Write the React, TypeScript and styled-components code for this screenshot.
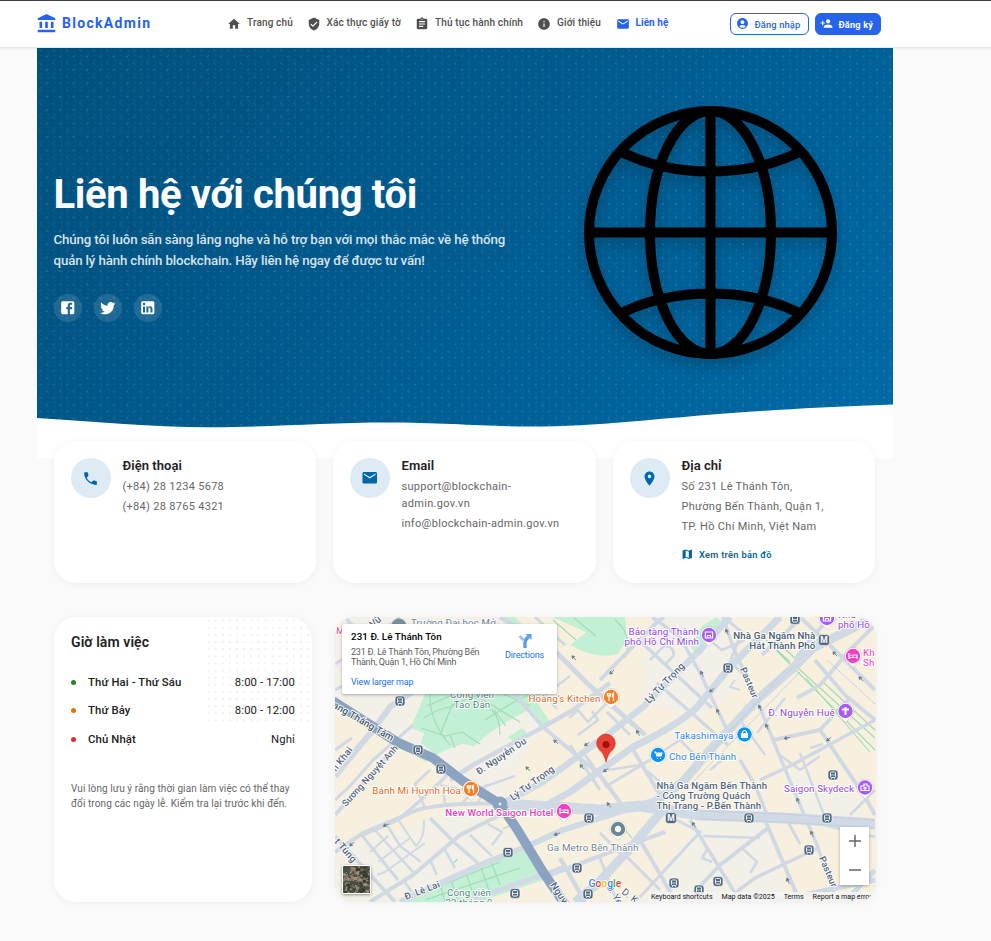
import React from "react";
import styled, { createGlobalStyle } from "styled-components";
import {
  MdAccountBalance, MdHome, MdVerifiedUser, MdAssignment, MdInfo, MdEmail,
  MdAccountCircle, MdPersonAdd, MdPhone, MdLocationOn, MdMap,
} from "react-icons/md";

const Global = createGlobalStyle`
  * { box-sizing: border-box; }
  body { margin: 0; background: #fafafa; font-family: Roboto, sans-serif; color: #212121; overflow: hidden; }
  svg { display: block; flex: none; }
  h1, h2, h3, p { margin: 0; }
`;

const Page = styled.div`width: 991px; height: 941px; overflow: hidden; background: #fafafa;`;

const Header = styled.header`
  position: relative; z-index: 2; height: 47px; padding: 0 110px 0 36px;
  display: flex; align-items: center; background: #fff;
  border-top: 1px solid #3c4245; box-shadow: 0 1px 3px rgba(0,0,0,.12);
`;
const Brand = styled.div`
  display: flex; align-items: center; gap: 5px; width: 191px; color: #2563eb;
  font-size: 14px; line-height: 18px; font-weight: 700; letter-spacing: 1.3px; white-space: nowrap;
  svg { margin-top: -2px; }
  span { margin-top: -2px; }
`;
const Nav = styled.nav`display: flex; align-items: center; flex: 1;`;
const NavItem = styled.a<{ $active?: boolean; $width: number }>`
  display: flex; align-items: center; gap: 6px; width: ${p => p.$width}px; white-space: nowrap;
  font-size: 10px; font-weight: ${p => (p.$active ? 700 : 500)}; letter-spacing: ${p => (p.$active ? .05 : .15)}px;
  color: ${p => (p.$active ? "#2563eb" : "#4f4f4f")};
  svg { margin-top: 0; }
  span { margin-top: -4px; }
`;
const Actions = styled.div`display: flex; gap: 6px;`;
const Button = styled.button<{ $solid?: boolean }>`
  height: 22px; width: ${p => (p.$solid ? 66 : 79)}px; padding: 0 0 0 ${p => (p.$solid ? 4 : 5)}px; display: flex; align-items: center; gap: 5.5px;
  border: 1px solid #2563eb; border-radius: 6px; font: ${p => (p.$solid ? 700 : 500)} 9.3px Roboto, sans-serif;
  letter-spacing: .14px; white-space: nowrap;
  background: ${p => (p.$solid ? "#2563eb" : "#fff")}; color: ${p => (p.$solid ? "#fff" : "#2563eb")};
  svg { margin-top: -1px; }
`;

const Main = styled.main`width: 856px; margin-left: 37px; padding-top: 1px;`;
const Hero = styled.section`
  position: relative; height: 410px; padding: 0 56px 0 17px; overflow: hidden;
  display: flex; justify-content: space-between; align-items: flex-start;
  background:
    radial-gradient(circle, rgba(255,255,255,.10) .9px, transparent 1.2px) 3px 2px / 13.4px 13.4px,
    radial-gradient(circle, rgba(255,255,255,.08) .8px, transparent 1.1px) 9.7px 8.7px / 13.4px 13.4px,
    radial-gradient(circle, rgba(255,255,255,.10) .6px, transparent 1px) 1px 1px / 6.7px 4.5px,
    linear-gradient(135deg, #01507c 0%, #005a8e 45%, #006aa7 100%);
`;
const HeroText = styled.div`padding-top: 123px; color: #fff;`;
const HeroTitle = styled.h1`font-size: 40px; line-height: 48px; font-weight: 700; letter-spacing: -.36px; white-space: nowrap; margin-left: -.5px;`;
const HeroLead = styled.p`
  margin-top: 10px; font-size: 13.3px; line-height: 21.3px; font-weight: 500; letter-spacing: -.14px;
  color: rgba(255,255,255,.85); white-space: nowrap; margin-left: -.5px;
`;
const Socials = styled.div`display: flex; gap: 12px; margin-top: 22.5px; margin-left: -.5px;`;
const Social = styled.a`
  width: 28px; height: 28px; border-radius: 50%; background: rgba(255,255,255,.12);
  display: grid; place-items: center; color: #fff;
`;
const Globe = styled.svg`margin-top: 57.5px; overflow: visible; filter: drop-shadow(0 7px 7px rgba(0,0,0,.2));`;
const Wave = styled.svg`position: absolute; left: 0; bottom: 0;`;

const Contacts = styled.section`
  position: relative; display: grid; grid-template-columns: 262px 263px 262px; gap: 17px;
  margin: -17px 17px 0; height: 142px;
`;
const Card = styled.article`
  background: #fff; border-radius: 22px; box-shadow: 0 1px 8px rgba(0,0,0,.05);
  padding: 17px; display: flex; gap: 11.5px;
`;
const Bubble = styled.div`
  width: 40px; height: 40px; flex: none; border-radius: 50%; background: #deebf4; color: #0067a5;
  display: grid; place-items: center;
  svg { margin-left: -1px; }
`;
const CardTitle = styled.h3`font-size: 13px; line-height: 16px; font-weight: 600; letter-spacing: .05px; margin-bottom: 4px;`;
const Line = styled.p`
  font-size: 11px; line-height: 17px; margin-bottom: 3px; color: #666; letter-spacing: .3px; white-space: nowrap;
`;
const MapLink = styled.a`
  display: flex; align-items: center; gap: 6px; margin-top: 12.500px; line-height: 14px; margin-left: -1px;
  font-size: 9.3px; font-weight: 600; letter-spacing: .26px; color: #0067a5; white-space: nowrap;
`;

const Lower = styled.section`display: flex; gap: 23px; margin: 34px 17px 0;`;
const Hours = styled.article`
  width: 258px; height: 285px; border-radius: 22px; padding: 17px;
  box-shadow: 0 1px 8px rgba(0,0,0,.05);
  background: linear-gradient(#fff,#fff) 0 0 / 152px 100% no-repeat, linear-gradient(#fff,#fff) 0 106px / 100% 200px no-repeat,
    radial-gradient(circle, #eee 1px, transparent 1.3px) 151px 0 / 7.13px 7.13px, #fff;
`;
const HoursTitle = styled.h2`font-size: 14px; line-height: 17px; font-weight: 600; margin-bottom: 17px; letter-spacing: .09px;`;
const Day = styled.div`
  display: flex; align-items: center; height: 28.5px; font-size: 11.3px; letter-spacing: .13px;
`;
const Dot = styled.i<{ $color: string }>`width: 5px; height: 5px; border-radius: 50%; margin-right: 12px; background: ${p => p.$color};`;
const DayName = styled.span`font-weight: 500; flex: 1;`;
const Note = styled.p`margin-top: 28.5px; font-size: 10px; line-height: 14.7px; color: #666; letter-spacing: .1px; white-space: nowrap;`;

const MapFrame = styled.div`
  position: relative; width: 541px; height: 285px; border-radius: 20px; overflow: hidden; background: #f5efe2;
  box-shadow: 0 1px 8px rgba(0,0,0,.05);
`;
const Place = styled.div`
  position: absolute; left: 7px; top: 7px; width: 215px; height: 70px; padding: 7px 13px 0 9px; background: #fff;
  border-radius: 2px; box-shadow: 0 1px 3px rgba(0,0,0,.3); display: flex; justify-content: space-between;
`;
const PlaceName = styled.div`font-size: 9.8px; line-height: 12px; font-weight: 500; color: #000; white-space: nowrap; letter-spacing: .08px;`;
const PlaceAddr = styled.div`font-size: 9px; line-height: 10px; margin-top: 4px; color: #5b5b5b; white-space: nowrap; letter-spacing: -.2px;`;
const Blue = styled.a`display: block; font-size: 9px; line-height: 11px; color: #1a73e8; letter-spacing: -.15px;`;
const Larger = styled(Blue)`margin-top: 10px;`;
const Directions = styled.div`display: flex; flex-direction: column; align-items: center; padding-top: 2px; gap: 2px;`;
const Thumb = styled.div`position: absolute; left: 7px; top: 248px; width: 29px; height: 29px; border: 1px solid #fff; border-radius: 2px; overflow: hidden; box-shadow: 0 1px 3px rgba(0,0,0,.4);`;
const ZoomBox = styled.div`
  position: absolute; left: 505px; top: 210px; width: 29px; height: 58px; background: #fff; box-shadow: 0 1px 3px rgba(0,0,0,.3);
  display: grid; grid-template-rows: 28px 30px; place-items: center;
`;
const Legal = styled.div`
  position: absolute; left: 313px; bottom: 0; height: 10px; padding-left: 3px; width: 228px; display: flex; align-items: center; gap: 9px;
  background: rgba(245,245,245,.8); font-size: 7.1px; line-height: 10px; color: #111; white-space: nowrap;
`;

const paths = {
  facebook: "M5 3h14a2 2 0 0 1 2 2v14a2 2 0 0 1-2 2H5a2 2 0 0 1-2-2V5a2 2 0 0 1 2-2m13 2h-2.5A3.5 3.5 0 0 0 12 8.5V11h-2v3h2v7h3v-7h3v-3h-3V9a1 1 0 0 1 1-1h2V5z",
  twitter: "M22.46 6c-.77.35-1.6.58-2.46.69.88-.53 1.56-1.37 1.88-2.38-.83.5-1.75.85-2.72 1.05C18.37 4.5 17.26 4 16 4c-2.35 0-4.27 1.92-4.27 4.29 0 .34.04.67.11.98C8.28 9.09 5.11 7.38 3 4.79c-.37.63-.58 1.37-.58 2.15 0 1.49.75 2.81 1.91 3.56-.71 0-1.37-.2-1.95-.5v.03c0 2.08 1.48 3.82 3.44 4.21a4.22 4.22 0 0 1-1.93.07 4.28 4.28 0 0 0 4 2.98 8.521 8.521 0 0 1-5.33 1.84c-.34 0-.68-.02-1.02-.06C3.44 20.29 5.7 21 8.12 21 16 21 20.33 14.46 20.33 8.79c0-.19 0-.37-.01-.56.84-.6 1.56-1.36 2.14-2.23z",
  linkedin: "M19 3a2 2 0 0 1 2 2v14a2 2 0 0 1-2 2H5a2 2 0 0 1-2-2V5a2 2 0 0 1 2-2h14m-.5 15.5v-5.3a3.26 3.26 0 0 0-3.26-3.26c-.85 0-1.84.52-2.32 1.3v-1.11h-2.79v8.37h2.79v-4.93c0-.77.62-1.4 1.39-1.4a1.4 1.4 0 0 1 1.4 1.4v4.93h2.79M6.88 8.56a1.68 1.68 0 0 0 1.68-1.68c0-.93-.75-1.69-1.68-1.69a1.69 1.69 0 0 0-1.69 1.69c0 .93.76 1.68 1.69 1.68m1.39 9.94v-8.37H5.5v8.37h2.77z",
};

const nav = [
  { label: "Trang chủ", Icon: MdHome, w: 79.5 },
  { label: "Xác thực giấy tờ", Icon: MdVerifiedUser, w: 108.5 },
  { label: "Thủ tục hành chính", Icon: MdAssignment, w: 122 },
  { label: "Giới thiệu", Icon: MdInfo, w: 78.5 },
  { label: "Liên hệ", Icon: MdEmail, w: 60, active: true },
];

/* Street network: [path, width] */
const minor: [string, number][] = [
  ["M335 664L372 640L400 617", 3], ["M335 690L366 673L400 648", 3], ["M427 682L390 707L373 730L335 776", 6],
  ["M413 725L373 760L350 786L335 800", 3], ["M395 747L335 815", 4], ["M335 750L352 738", 3],
  ["M452 770L430 792L398 820L363 835", 3.5], ["M335 852L363 833L417 810Q450 802 503 804", 4],
  ["M335 836L395 902", 4], ["M360 833L398 880", 3], ["M373 828L413 872", 2.5], ["M386 823L400 846L421 862", 2.5],
  ["M397 818L416 846Q425 838 424 820", 2], ["M370 852L388 836M378 862L410 838M377 875L385 872L425 843", 2],
  ["M370 902L413 875L460 835L498 816L507 806", 4], ["M430 818L455 843L480 865", 3.5], ["M403 880L412 892M430 860L437 875M445 850L455 868", 2.5],
  ["M425 808L415 784L430 770", 2.5], ["M445 803L443 790M462 803L475 790L515 776", 2.5], ["M478 803L487 784", 2],
  ["M488 824L502 832L492 845M470 835L492 856", 2.5], ["M465 790L440 785", 2],
  ["M490 666L543 727L600 775L627 812", 4], ["M500 617L557 653L587 683L645 735", 5], ["M535 617L565 645", 3],
  ["M610 683L573 710L543 727L473 765L450 780", 4.5], ["M600 680L657 622L664 617", 4], ["M640 641L712 708", 3.5],
  ["M557 709L545 695L570 676", 2.5], ["M569 718L578 710L588 722L610 700", 2.5], ["M578 735L598 720L592 711", 2.5],
  ["M652 617L680 637L700 673L727 730", 3.5], ["M657 683L703 723L728 745", 3.5], ["M607 712L630 735", 3],
  ["M665 665L674 655Q673 645 664 646L650 660", 2.5], ["M700 654L709 640L722 650L745 640", 2.5],
  ["M723 617L742 632L730 662L750 680", 3], ["M762 655L802 617", 4], ["M735 680L730 687L740 690M745 705L755 710", 2],
  ["M800 617L840 655L875 690", 4], ["M830 617L810 640L795 660", 4], ["M875 625L850 650L820 685L797 698", 4],
  ["M815 660L845 695L875 720", 4], ["M757 700L775 745L800 805L817 845L837 902", 3.5],
  ["M723 617L733 647L757 700", 3.5], ["M773 740L820 730L848 700", 4], ["M820 730L865 797L875 815", 4],
  ["M785 698L757 733M740 720L765 755", 2.5], ["M650 760L605 787", 3], ["M632 748L660 795", 4],
  ["M740 760L755 785L768 817M760 780L790 766L875 720", 3.5], ["M800 753L824 815M810 748L823 744", 2.5],
  ["M875 790L850 815M780 755L800 770L820 756", 2.5], ["M690 820L735 893L740 902", 3.5], ["M703 836L760 838", 2.5],
  ["M768 828L720 865L685 902", 4], ["M765 820L800 902", 4], ["M640 840L675 900", 4], ["M625 855L660 890", 3],
  ["M667 815L700 832L640 897L633 902", 3], ["M600 833L622 855", 3], ["M820 847L755 878L735 893", 3.5],
  ["M708 848L702 858L712 862M742 848L757 862L750 873", 2.5], ["M787 820L800 844M825 825L875 837", 3],
  ["M657 755L680 740L700 760L725 740M710 770L722 760L712 750", 2.5], ["M608 770L640 765L660 782", 2.5],
  ["M585 755L610 790M570 745L600 790", 3], ["M560 858L585 902M543 878L610 852L665 832", 4.5], ["M600 858L617 902", 3],
  ["M345 617L372 650", 4], ["M845 902L875 870M770 902L875 880", 5],
];
const major: [string, number][] = [
  ["M730 617L697 653L643 707L607 735L543 782L505 802", 6.5],
  ["M780 617L730 667L697 707Q680 724 633 747L570 792L545 806", 7],
  ["M875 617L813 648L793 668L757 700L710 750L683 782L657 800", 9],
  ["M505 804L600 810L640 806L700 815L783 818L875 824", 11],
  ["M667 805L627 852L595 886L575 902", 9],
  ["M400 902L480 865L523 848L563 830L610 815L664 797", 6],
  ["M473 899L543 875L567 866", 5],
];

const Roads = ({ list, color }: { list: [string, number][]; color: string }) => (
  <g fill="none" stroke={color} strokeLinejoin="round">
    {list.map(([d, w]) => <path key={d} d={d} strokeWidth={w} />)}
  </g>
);

type LabelProps = { x: number; y: number; c?: string; w?: number; r?: number; a?: "start" | "middle" | "end"; s?: number; lines: string[] };
const Label = ({ x, y, c = "#52637a", w = 400, r = 0, a = "start", s = 9.7, lines }: LabelProps) => (
  <text transform={`translate(${x} ${y}) rotate(${r})`} fill={c} fontSize={s} fontWeight={w} textAnchor={a}
    letterSpacing=".15" stroke="#fff" strokeWidth="1.8" strokeLinejoin="round" paintOrder="stroke">
    {lines.map((t, i) => <tspan key={t} x="0" dy={i ? 10 : 0}>{t}</tspan>)}
  </text>
);

const Pin = ({ x, y, c, kind }: { x: number; y: number; c: string; kind: string }) => (
  <g transform={`translate(${x} ${y})`}>
    <path d="M0 11.3L-5 6.7A8.4 8.4 0 1 1 5 6.7Z" fill="#fff" stroke="#0003" strokeWidth=".6" />
    <circle r="7.2" fill={c} />
    <g fill="none" stroke="#fff" strokeWidth="1.2">
      {kind === "food" && <path d="M-2-4v8M-3.6-4v3h3.2v-3M2.5 4v-8q-1.5 1-1 4h1" />}
      {kind === "bed" && <path d="M-4-3v6M-4 1.5h8V3M4 1.5v-2.5h-4v2.5M-2.5-.6h1" />}
      {kind === "museum" && <><path d="M-3.6-3H3.6V3H-3.6Z" /><path d="M-1.5 2.5v-2h3v2" /></>}
      {kind === "bag" && <><path d="M-2-1v-1.5q2-3 4 0V-1" /><path d="M-3-1h6v4h-6z" fill="#fff" /></>}
      {kind === "cart" && <><path d="M-4-3h1.5L-1 1h4l1-3h-6" fill="#fff" /><path d="M-1 3.3h1M2 3.3h1" /></>}
      {kind === "cross" && <path d="M0-4v8M-3.5-1.4h7" strokeWidth="2" />}
      {kind === "camera" && <><path d="M-4-1.5h3v-2h3v2h2V3H-4z" /><circle r="1" cy=".7" /></>}
      {kind === "dot" && <circle r="2.6" fill="#fff" />}
    </g>
  </g>
);

const stations = [[400, 701], [418, 750], [441, 769], [589, 818], [508, 852.5], [515, 893.5], [577, 868], [588, 894], [674, 883], [718, 881.5], [699, 890], [809, 850], [749, 818], [827, 818], [833, 775], [728, 668], [795, 619.5]];
const arrows = [[574, 658, 45], [556, 742, 40], [587, 744, -35], [612, 672, -45], [702, 674, 65], [712, 690, -40], [718, 712, 65], [727, 632, 65], [835, 654, 45], [861, 679, 45], [760, 708, 65], [767, 727, 65], [829, 739, -40], [787, 738, -12], [386, 825, -20], [352, 844, -40], [528, 769, 45], [582, 767, 50], [557, 834, -22], [694, 825, 55], [788, 881, 65], [812, 834, 65], [798, 801, 65], [606, 770, -35], [609, 805, 50], [638, 733, 60]];

const CityMap = () => (
  <svg width="541" height="286" viewBox="335 617 541 286" fontFamily="Roboto, sans-serif">
    <rect x="335" y="617" width="541" height="286" fill="#f8f0df" />
    <path d="M335 617H500L540 727L500 800L430 757L335 703ZM650 617H722L745 680L700 720L640 700ZM335 850L460 810L520 840L400 903H335ZM698 820L765 824L790 903H640ZM780 765L860 800V820H800Z" fill="#f3f0e7" />
    <g fill="#c3f0d4">
      <path d="M427 688L418 711L410 728L424 733L421 743L436 755L450 748L462 744L474 746L491 732L509 720L530 709L545 727L552 724L535 700L557 686L550 672L445 672Z" />
      <path d="M552 617H625L627 640L618 654Q596 660 570 645L586 632Z" />
      <path d="M398 903L480 867L526 850L543 880L490 898L478 903Z" />
      <path d="M500 617L515 617L522 624L510 624ZM508 737L522 728L530 736L516 744ZM702 626L716 617L722 622L694 652L690 645ZM415 755L424 750L436 757L425 762ZM800 652L808 645L813 650L805 656Z" />
    </g>
    <g fill="none" stroke="#9fdbb9" strokeWidth="1.1">
      <path d="M427 706L450 696L480 698L520 722M424 718Q440 706 470 704T500 735M421 728L445 736L462 732L480 744M440 735L452 705L485 692M455 748L450 735M475 704L495 690L530 706M485 720L512 703L540 690M494 710L506 726M430 690Q428 720 450 745" />
      <path d="M410 898L500 862M425 900L520 868M450 877L457 898M465 870L474 896M480 865L490 893M440 884L445 902M491 861L500 885" />
      <path d="M553 620L576 640M574 618L596 636M766 640L790 662M775 640L795 658M766 640L875 750M798 668L875 738M824 683L875 730M806 678L870 752M615 620Q634 635 625 658M805 650L822 636M622 826L632 838M503 829L509 826M453 863L458 859" />
    </g>
    <Roads list={minor} color="#d0d9e3" />
    <Roads list={major} color="#d0dae5" />
    <g fill="none" stroke="#c1cdd9" strokeWidth=".8">
      <path d="M800 672L690 785M793 667L685 775M787 668L700 765M700 811L783 814L875 820M700 819L783 822L875 828" />
      <path d="M827 660L875 704" />
    </g>
    <path d="M333 701L397 742L433 758L463 781L500 804L517 829L543 872L566 906" fill="none" stroke="#8ba3c0" strokeWidth="9.5" />
    <circle cx="500" cy="804" r="7.5" fill="#8ba3c0" /><circle cx="500" cy="804" r="1.5" fill="#eef2f6" />

    {arrows.map(([x, y, r]) => (
      <path key={`${x}-${y}`} transform={`translate(${x} ${y}) rotate(${r})`} d="M-3 0H3M-3-.1L-.5-1.6V1.6Z" stroke="#6e7c8b" fill="#6e7c8b" strokeWidth=".8" />
    ))}
    {stations.map(([x, y]) => (
      <g key={`${x}-${y}`} transform={`translate(${x} ${y})`}>
        <rect x="-5" y="-5" width="10" height="10" rx="3" fill="#516882" stroke="#fff" strokeWidth=".6" />
        <rect x="-2.5" y="-3" width="5" height="5.5" rx="1" fill="none" stroke="#fff" strokeWidth=".9" />
        <path d="M-2.5 0h5M-2 4l1-1M2 4l-1-1" stroke="#fff" strokeWidth=".7" />
      </g>
    ))}
    {[[824, 640], [671, 818]].map(([x, y]) => (
      <g key={x} transform={`translate(${x} ${y})`}>
        <rect x="-5.5" y="-5.5" width="11" height="11" rx="3" fill="#516882" stroke="#fff" strokeWidth=".6" />
        <text y="3" textAnchor="middle" fontSize="8.5" fontWeight="700" fill="#fff">M</text>
      </g>
    ))}
    <circle cx="399" cy="626" r="7.5" fill="#78909c" /><circle cx="399" cy="627" r="3" fill="#fff" />

    <Label x={411} y={625.5} lines={["Trường Đại học Mở"]} c="#6a7f8f" />
    <Label x={336} y={634} lines={["M"]} c="#e0478b" />
    <Label x={373} y={628} r={-40} lines={["Vũ"]} w={500} />
    <Label x={472} y={698} a="middle" lines={["Công viên", "Tao Đàn"]} c="#4d8978" />
    <Label x={528.5} y={702} lines={["Hoàng's Kitchen"]} c="#dd6a22" />
    <Label x={699} y={635} a="end" lines={["Bảo tàng Thành", "phố Hồ Chí Minh"]} c="#9146dc" s={9.8} />
    <Label x={815.5} y={638.5} a="end" lines={["Nhà Ga Ngầm Nhà", "Hát Thành Phố"]} w={500} c="#455a6d" />
    <Label x={838} y={618} lines={["Nhà", "phố Hồ"]} c="#9146dc" />
    <Label x={863} y={656} lines={["Kh", "Sh"]} c="#e83cc0" />
    <Label x={835} y={716} a="end" lines={["Đ. Nguyễn Huệ"]} c="#9146dc" s={9.9} />
    <Label x={733.5} y={739} a="end" lines={["Takashimaya"]} c="#2f86ec" s={9.8} />
    <Label x={669} y={760} lines={["Chợ Bến Thành"]} c="#2f86ec" />
    <Label x={461} y={793.5} a="end" lines={["Bánh Mì Huynh Hoa"]} c="#dd6a22" s={9.8} />
    <Label x={553.5} y={816} a="end" lines={["New World Saigon Hotel"]} c="#e83cc0" w={500} s={9.7} />
    <Label x={656.5} y={789} lines={["Nhà Ga Ngầm Bến Thành", "- Công Trường Quách", "Thị Trang - P.Bến Thành"]} w={500} c="#51667a" s={9.6} />
    <Label x={854} y={792} a="end" lines={["Saigon Skydeck"]} c="#9146dc" />
    <Label x={547} y={851} lines={["Ga Metro Bến Thành"]} c="#71858f" s={9.8} />
    <Label x={469} y={896} a="middle" lines={["Công viên", "23 tháng 9"]} c="#4d8978" />
    <Label x={332} y={707} r={30} lines={["ạng Tháng Tám"]} w={500} c="#455468" />
    <Label x={649} y={704} r={-46} lines={["Lý Tự Trọng"]} w={500} />
    <Label x={513} y={801} r={-36} lines={["Lý Tự Trọng"]} w={500} />
    <Label x={479} y={775} r={-34} lines={["Đ. Nguyễn Du"]} w={500} s={9.4} />
    <Label x={346} y={807} r={-48} lines={["Sương Nguyệt Anh"]} w={500} s={9.1} />
    <Label x={336} y={772} r={-52} lines={["n Khai"]} w={500} />
    <Label x={740} y={669} r={67} lines={["Pasteur"]} w={500} s={9.1} />
    <Label x={819} y={858} r={67} lines={["Pasteur"]} w={500} s={9.1} />
    <Label x={406} y={900} r={-21} lines={["Đ. Lê Lai"]} w={500} s={9.4} />
    <Label x={334} y={842} r={49} lines={["t Tùng"]} w={500} />
    <Label x={550} y={885} r={57} lines={["Nguy"]} w={500} />
    <Label x={606} y={887} r={58} lines={["D. Ye"]} />
    <Label x={621} y={893} r={38} lines={["D. K"]} />

    <Pin x={611} y={697} c="#f57f24" kind="food" />
    <Pin x={471} y={789} c="#f57f24" kind="food" />
    <Pin x={564} y={811} c="#f33fc6" kind="bed" />
    <Pin x={853} y={656} c="#f33fc6" kind="bed" />
    <Pin x={709} y={635} c="#a65cf5" kind="museum" />
    <Pin x={827} y={618} c="#a65cf5" kind="museum" />
    <Pin x={845.5} y={711} c="#a65cf5" kind="cross" />
    <Pin x={865} y={787.5} c="#a65cf5" kind="camera" />
    <Pin x={744.5} y={734.5} c="#0b93f5" kind="bag" />
    <Pin x={658} y={755} c="#0b93f5" kind="cart" />
    <Pin x={618} y={829} c="#6c8794" kind="dot" />
    <path d="M606 762Q604 753 599 749.5A9.3 9.3 0 1 1 613 749.5Q608 753 606 762Z" fill="#ea4335" stroke="#c5221f" strokeWidth=".6" />
    <circle cx="606" cy="744.5" r="3.5" fill="#a50e0e" />
    <text x="588.5" y="887" fontSize="10.3" fontWeight="500" stroke="#fff" strokeWidth="1.5" paintOrder="stroke">
      <tspan fill="#4285f4">G</tspan><tspan fill="#ea4335">o</tspan><tspan fill="#fbbc04">o</tspan><tspan fill="#4285f4">g</tspan><tspan fill="#34a853">l</tspan><tspan fill="#ea4335">e</tspan>
    </text>
  </svg>
);

const specks = Array.from({ length: 210 }, (_, i) => ({
  x: (i * i * 3.31 + i * 7.7) % 27, y: (i * i * 1.77 + i * 4.9) % 27, s: 1 + (i % 3) * 0.8,
  c: ["#8c7a68", "#3f433a", "#a78f7c", "#b08a78", "#2e3a33", "#6b5f53"][(i * 5 + (i % 4)) % 6],
}));

export default function App() {
  return (
    <Page>
      <Global />
      <Header>
        <Brand><MdAccountBalance size={21} /><span>BlockAdmin</span></Brand>
        <Nav>
          {nav.map(({ label, Icon, w, active }) => (
            <NavItem key={label} $width={w} $active={active}><Icon size={14} /><span>{label}</span></NavItem>
          ))}
        </Nav>
        <Actions>
          <Button><MdAccountCircle size={13} />Đăng nhập</Button>
          <Button $solid><MdPersonAdd size={13} />Đăng ký</Button>
        </Actions>
      </Header>
      <Main>
        <Hero>
          <HeroText>
            <HeroTitle>Liên hệ với chúng tôi</HeroTitle>
            <HeroLead>
              Chúng tôi luôn sẵn sàng lắng nghe và hỗ trợ bạn với mọi thắc mắc về hệ thống<br />
              quản lý hành chính blockchain. Hãy liên hệ ngay để được tư vấn!
            </HeroLead>
            <Socials>
              {Object.entries(paths).map(([name, d]) => (
                <Social key={name} aria-label={name}>
                  <svg width="17.5" height="17.5" viewBox="0 0 24 24" fill="currentColor"><path d={d} /></svg>
                </Social>
              ))}
            </Socials>
          </HeroText>
          <Globe width="253" height="253" viewBox="-126.5 -126.5 253 253" fill="none" stroke="#000" strokeWidth="10">
            <circle r="121.5" />
            <ellipse rx="60.5" ry="121.5" />
            <path d="M0-121V121M-121 0H121M-90-81Q-50-61 0-61T90-81M-90 81Q-50 61 0 61T90 81" />
          </Globe>
          <Wave width="856" height="56" viewBox="0 0 856 56">
            <path d="M0 16C60 20 115 25 170 25.3S290 20.5 350 20.5S450 25 505 24.5C600 23 660 9 856 2.5V56H0Z" fill="#fff" />
          </Wave>
        </Hero>
        <Contacts>
          <Card>
            <Bubble><MdPhone size={17} /></Bubble>
            <div>
              <CardTitle>Điện thoại</CardTitle>
              <Line>(+84) 28 1234 5678</Line>
              <Line>(+84) 28 8765 4321</Line>
            </div>
          </Card>
          <Card>
            <Bubble><MdEmail size={17.5} /></Bubble>
            <div>
              <CardTitle>Email</CardTitle>
              <Line>support@blockchain-<br />admin.gov.vn</Line>
              <Line>info@blockchain-admin.gov.vn</Line>
            </div>
          </Card>
          <Card>
            <Bubble><MdLocationOn size={17} /></Bubble>
            <div>
              <CardTitle>Địa chỉ</CardTitle>
              <Line>Số 231 Lê Thánh Tôn,</Line>
              <Line>Phường Bến Thành, Quận 1,</Line>
              <Line>TP. Hồ Chí Minh, Việt Nam</Line>
              <MapLink><MdMap size={12.5} />Xem trên bản đồ</MapLink>
            </div>
          </Card>
        </Contacts>
        <Lower>
          <Hours>
            <HoursTitle>Giờ làm việc</HoursTitle>
            <Day><Dot $color="#2e7d32" /><DayName>Thứ Hai - Thứ Sáu</DayName>8:00 - 17:00</Day>
            <Day><Dot $color="#ed6c02" /><DayName>Thứ Bảy</DayName>8:00 - 12:00</Day>
            <Day><Dot $color="#d32f2f" /><DayName>Chủ Nhật</DayName>Nghỉ</Day>
            <Note>Vui lòng lưu ý rằng thời gian làm việc có thể thay<br />đổi trong các ngày lễ. Kiểm tra lại trước khi đến.</Note>
          </Hours>
          <MapFrame>
            <CityMap />
            <Place>
              <div>
                <PlaceName>231 Đ. Lê Thánh Tôn</PlaceName>
                <PlaceAddr>231 Đ. Lê Thánh Tôn, Phường Bến<br />Thành, Quận 1, Hồ Chí Minh</PlaceAddr>
                <Larger>View larger map</Larger>
              </div>
              <Directions>
                <svg width="14" height="15" viewBox="0 0 14 15" fill="none">
                  <path d="M7 15V10Q7 6.500 10.500 4" stroke="#5b9ce8" strokeWidth="3.4" /><path d="M7.500 1H13.500V7Z" fill="#5b9ce8" />
                  <path d="M1.500 3L5.500 7" stroke="#9cc3f2" strokeWidth="3" />
                </svg>
                <Blue>Directions</Blue>
              </Directions>
            </Place>
            <Thumb>
              <svg width="27" height="27" viewBox="0 0 27 27"><rect width="27" height="27" fill="#4b4e42" />
                {specks.map((s, i) => <rect key={i} x={s.x} y={s.y} width={s.s} height={s.s} fill={s.c} />)}
              </svg>
            </Thumb>
            <ZoomBox>
              <svg width="12" height="12" viewBox="0 0 12 12"><path d="M0 6H12M6 0V12" stroke="#666" strokeWidth="1.5" /></svg>
              <svg width="12" height="12" viewBox="0 0 12 12"><path d="M0 6H12" stroke="#666" strokeWidth="1.5" /></svg>
            </ZoomBox>
            <Legal><span>Keyboard shortcuts</span><span>Map data ©2025</span><span>Terms</span><span>Report a map error</span></Legal>
          </MapFrame>
        </Lower>
      </Main>
    </Page>
  );
}
